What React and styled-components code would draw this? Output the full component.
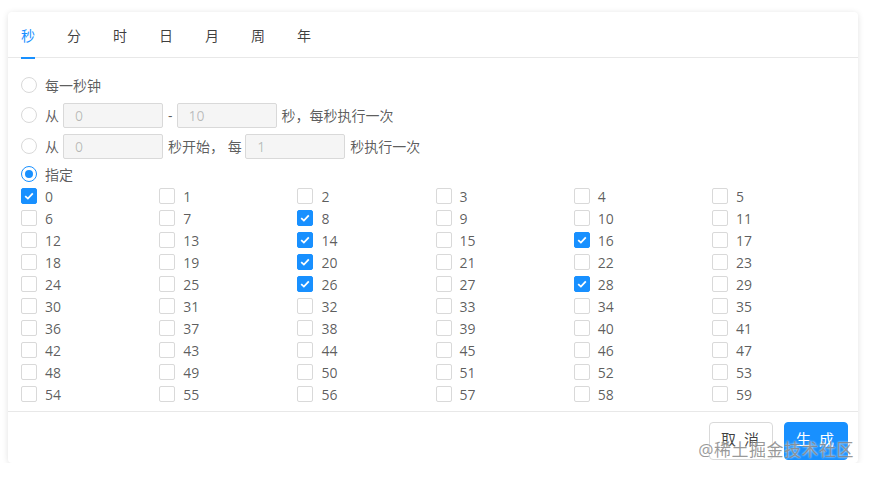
import React, { useState } from "react";
import styled, { createGlobalStyle } from "styled-components";

const GlobalStyle = createGlobalStyle`
  body {
    margin: 0;
    background: #fff;
    font-family: "Segoe UI", "Open Sans", "Noto Sans CJK SC", sans-serif;
    font-size: 14px;
    color: rgba(0, 0, 0, 0.65);
  }
`;

const tabs = ["秒", "分", "时", "日", "月", "周", "年"];
const checkedSeconds = [0, 8, 14, 16, 20, 26, 28];

const Page = styled.div`
  padding: 12px 13px 0 8px;
`;

const Card = styled.div`
  position: relative;
  width: 850px;
  height: 451px;
  background: #fff;
  border-radius: 4px;
  box-shadow: 0 1px 6px rgba(0, 0, 0, 0.12);
  overflow: hidden;
  display: flex;
  flex-direction: column;
`;

const TabBar = styled.div`
  display: flex;
  gap: 32px;
  padding-left: 13px;
  height: 45px;
  border-bottom: 1px solid #e8e8e8;
`;

const Tab = styled.div`
  position: relative;
  display: flex;
  align-items: center;
  font-size: 14px;
  color: ${(p) => (p.active ? "#1890ff" : "rgba(0, 0, 0, 0.75)")};
  &::after {
    content: "";
    position: absolute;
    left: 0;
    right: 0;
    bottom: -2px;
    height: 2px;
    background: ${(p) => (p.active ? "#1890ff" : "transparent")};
  }
`;

const Body = styled.div`
  padding: 12px 0 6px 13px;
`;

const Row = styled.div`
  display: flex;
  align-items: center;
  height: ${(p) => p.h || 30}px;
  margin-top: ${(p) => p.mt || 0}px;
`;

const Radio = styled.span`
  box-sizing: border-box;
  width: 16px;
  height: 16px;
  border-radius: 50%;
  border: 1px solid ${(p) => (p.checked ? "#1890ff" : "#d9d9d9")};
  margin-right: 8px;
  display: flex;
  align-items: center;
  justify-content: center;
  &::after {
    content: "";
    width: 8px;
    height: 8px;
    border-radius: 50%;
    background: ${(p) => (p.checked ? "#1890ff" : "transparent")};
  }
`;

const Label = styled.span`
  color: rgba(0, 0, 0, 0.65);
  margin-right: ${(p) => p.mr || 0}px;
  white-space: pre;
`;

const Input = styled.div`
  box-sizing: border-box;
  width: 100px;
  height: 25px;
  padding-left: 11px;
  display: flex;
  align-items: center;
  background: #f5f5f5;
  border: 1px solid #d9d9d9;
  border-radius: 2px;
  color: rgba(0, 0, 0, 0.25);
  margin-right: 5px;
`;

const Grid = styled.div`
  display: grid;
  grid-template-columns: repeat(6, 138.2px);
  grid-auto-rows: 22px;
`;

const Cell = styled.div`
  display: flex;
  align-items: center;
`;

const Box = styled.span`
  box-sizing: border-box;
  width: 16px;
  height: 16px;
  border-radius: 2px;
  margin-right: 8px;
  border: 1px solid ${(p) => (p.checked ? "#1890ff" : "#d9d9d9")};
  background: ${(p) => (p.checked ? "#1890ff" : "#fff")};
  display: flex;
  align-items: center;
  justify-content: center;
`;

const Footer = styled.div`
  border-top: 1px solid #e8e8e8;
  display: flex;
  justify-content: flex-end;
  gap: 11px;
  padding: 10px 10px 0 0;
`;

const Button = styled.button`
  box-sizing: border-box;
  width: 64px;
  height: 38px;
  padding: 0 0 6px;
  border-radius: 4px;
  font-family: inherit;
  font-size: 15px;
  letter-spacing: 2px;
  border: 1px solid ${(p) => (p.primary ? "#1890ff" : "#d9d9d9")};
  background: ${(p) => (p.primary ? "#1890ff" : "#fff")};
  color: ${(p) => (p.primary ? "#fff" : "rgba(0, 0, 0, 0.75)")};
`;

const Watermark = styled.div`
  position: absolute;
  right: 4px;
  bottom: 2px;
  font-size: 17px;
  color: rgba(120, 120, 120, 0.75);
  text-shadow: 0 0 2px #fff;
  pointer-events: none;
  letter-spacing: 0.5px;
`;

const Check = () => (
  <svg width="10" height="8" viewBox="0 0 10 8">
    <path d="M1.2 4.1 L3.9 6.6 L8.8 1.4" fill="none" stroke="#fff" strokeWidth="1.8" />
  </svg>
);

export default function App() {
  const [active] = useState(0);
  return (
    <Page>
      <GlobalStyle />
      <Card>
        <TabBar>
          {tabs.map((t, i) => (
            <Tab key={t} active={i === active}>
              {t}
            </Tab>
          ))}
        </TabBar>
        <Body>
          <Row>
            <Radio />
            <Label>每一秒钟</Label>
          </Row>
          <Row>
            <Radio />
            <Label mr={4}>从</Label>
            <Input>0</Input>
            <Label mr={4}>-</Label>
            <Input>10</Input>
            <Label>秒，每秒执行一次</Label>
          </Row>
          <Row mt={1}>
            <Radio />
            <Label mr={4}>从</Label>
            <Input>0</Input>
            <Label mr={0}>秒开始， 每 </Label>
            <Input>1</Input>
            <Label>秒执行一次</Label>
          </Row>
          <Row h={22} mt={2}>
            <Radio checked />
            <Label>指定</Label>
          </Row>
          <Grid>
            {Array.from({ length: 60 }, (_, n) => {
              const on = checkedSeconds.includes(n);
              return (
                <Cell key={n}>
                  <Box checked={on}>{on && <Check />}</Box>
                  <Label>{n}</Label>
                </Cell>
              );
            })}
          </Grid>
        </Body>
        <Footer>
          <Button>取 消</Button>
          <Button primary>生 成</Button>
        </Footer>
        <Watermark>@稀土掘金技术社区</Watermark>
      </Card>
    </Page>
  );
}
